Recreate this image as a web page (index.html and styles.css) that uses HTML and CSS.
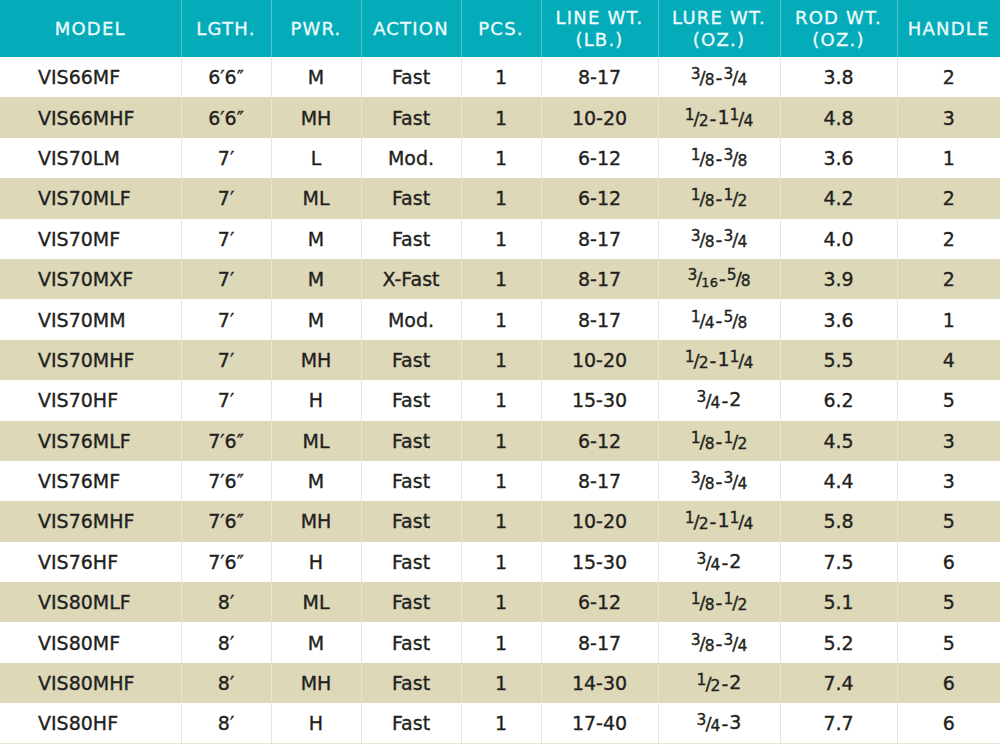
FILE: index.html
```html
<!DOCTYPE html>
<html>
<head>
<meta charset="utf-8">
<link rel="stylesheet" href="styles.css">
</head>
<body>
<table class="spec">
  <colgroup>
    <col class="c-model"><col class="c-lgth"><col class="c-pwr"><col class="c-action"><col class="c-pcs"><col class="c-line"><col class="c-lure"><col class="c-rod"><col class="c-handle">
  </colgroup>
  <thead>
    <tr>
      <th>MODEL</th><th>LGTH.</th><th>PWR.</th><th>ACTION</th><th>PCS.</th><th>LINE WT.<br>(LB.)</th><th>LURE WT.<br>(OZ.)</th><th>ROD WT.<br>(OZ.)</th><th>HANDLE</th>
    </tr>
  </thead>
  <tbody>
    <tr><td>VIS66MF</td><td>6′6″</td><td>M</td><td>Fast</td><td>1</td><td>8-17</td><td><span class="fr"><span class="n">3</span><span class="s">/</span><span class="d">8</span></span><span class="dash">-</span><span class="fr"><span class="n">3</span><span class="s">/</span><span class="d">4</span></span></td><td>3.8</td><td>2</td></tr>
    <tr><td>VIS66MHF</td><td>6′6″</td><td>MH</td><td>Fast</td><td>1</td><td>10-20</td><td><span class="fr"><span class="n">1</span><span class="s">/</span><span class="d">2</span></span><span class="dash">-</span>1<span class="fr"><span class="n">1</span><span class="s">/</span><span class="d">4</span></span></td><td>4.8</td><td>3</td></tr>
    <tr><td>VIS70LM</td><td>7′</td><td>L</td><td>Mod.</td><td>1</td><td>6-12</td><td><span class="fr"><span class="n">1</span><span class="s">/</span><span class="d">8</span></span><span class="dash">-</span><span class="fr"><span class="n">3</span><span class="s">/</span><span class="d">8</span></span></td><td>3.6</td><td>1</td></tr>
    <tr><td>VIS70MLF</td><td>7′</td><td>ML</td><td>Fast</td><td>1</td><td>6-12</td><td><span class="fr"><span class="n">1</span><span class="s">/</span><span class="d">8</span></span><span class="dash">-</span><span class="fr"><span class="n">1</span><span class="s">/</span><span class="d">2</span></span></td><td>4.2</td><td>2</td></tr>
    <tr><td>VIS70MF</td><td>7′</td><td>M</td><td>Fast</td><td>1</td><td>8-17</td><td><span class="fr"><span class="n">3</span><span class="s">/</span><span class="d">8</span></span><span class="dash">-</span><span class="fr"><span class="n">3</span><span class="s">/</span><span class="d">4</span></span></td><td>4.0</td><td>2</td></tr>
    <tr><td>VIS70MXF</td><td>7′</td><td>M</td><td>X-Fast</td><td>1</td><td>8-17</td><td><span class="fr"><span class="n">3</span><span class="s">/</span><span class="d sm">16</span></span><span class="dash">-</span><span class="fr"><span class="n">5</span><span class="s">/</span><span class="d">8</span></span></td><td>3.9</td><td>2</td></tr>
    <tr><td>VIS70MM</td><td>7′</td><td>M</td><td>Mod.</td><td>1</td><td>8-17</td><td><span class="fr"><span class="n">1</span><span class="s">/</span><span class="d">4</span></span><span class="dash">-</span><span class="fr"><span class="n">5</span><span class="s">/</span><span class="d">8</span></span></td><td>3.6</td><td>1</td></tr>
    <tr><td>VIS70MHF</td><td>7′</td><td>MH</td><td>Fast</td><td>1</td><td>10-20</td><td><span class="fr"><span class="n">1</span><span class="s">/</span><span class="d">2</span></span><span class="dash">-</span>1<span class="fr"><span class="n">1</span><span class="s">/</span><span class="d">4</span></span></td><td>5.5</td><td>4</td></tr>
    <tr><td>VIS70HF</td><td>7′</td><td>H</td><td>Fast</td><td>1</td><td>15-30</td><td><span class="fr"><span class="n">3</span><span class="s">/</span><span class="d">4</span></span><span class="dash">-</span>2</td><td>6.2</td><td>5</td></tr>
    <tr><td>VIS76MLF</td><td>7′6″</td><td>ML</td><td>Fast</td><td>1</td><td>6-12</td><td><span class="fr"><span class="n">1</span><span class="s">/</span><span class="d">8</span></span><span class="dash">-</span><span class="fr"><span class="n">1</span><span class="s">/</span><span class="d">2</span></span></td><td>4.5</td><td>3</td></tr>
    <tr><td>VIS76MF</td><td>7′6″</td><td>M</td><td>Fast</td><td>1</td><td>8-17</td><td><span class="fr"><span class="n">3</span><span class="s">/</span><span class="d">8</span></span><span class="dash">-</span><span class="fr"><span class="n">3</span><span class="s">/</span><span class="d">4</span></span></td><td>4.4</td><td>3</td></tr>
    <tr><td>VIS76MHF</td><td>7′6″</td><td>MH</td><td>Fast</td><td>1</td><td>10-20</td><td><span class="fr"><span class="n">1</span><span class="s">/</span><span class="d">2</span></span><span class="dash">-</span>1<span class="fr"><span class="n">1</span><span class="s">/</span><span class="d">4</span></span></td><td>5.8</td><td>5</td></tr>
    <tr><td>VIS76HF</td><td>7′6″</td><td>H</td><td>Fast</td><td>1</td><td>15-30</td><td><span class="fr"><span class="n">3</span><span class="s">/</span><span class="d">4</span></span><span class="dash">-</span>2</td><td>7.5</td><td>6</td></tr>
    <tr><td>VIS80MLF</td><td>8′</td><td>ML</td><td>Fast</td><td>1</td><td>6-12</td><td><span class="fr"><span class="n">1</span><span class="s">/</span><span class="d">8</span></span><span class="dash">-</span><span class="fr"><span class="n">1</span><span class="s">/</span><span class="d">2</span></span></td><td>5.1</td><td>5</td></tr>
    <tr><td>VIS80MF</td><td>8′</td><td>M</td><td>Fast</td><td>1</td><td>8-17</td><td><span class="fr"><span class="n">3</span><span class="s">/</span><span class="d">8</span></span><span class="dash">-</span><span class="fr"><span class="n">3</span><span class="s">/</span><span class="d">4</span></span></td><td>5.2</td><td>5</td></tr>
    <tr><td>VIS80MHF</td><td>8′</td><td>MH</td><td>Fast</td><td>1</td><td>14-30</td><td><span class="fr"><span class="n">1</span><span class="s">/</span><span class="d">2</span></span><span class="dash">-</span>2</td><td>7.4</td><td>6</td></tr>
    <tr><td>VIS80HF</td><td>8′</td><td>H</td><td>Fast</td><td>1</td><td>17-40</td><td><span class="fr"><span class="n">3</span><span class="s">/</span><span class="d">4</span></span><span class="dash">-</span>3</td><td>7.7</td><td>6</td></tr>
  </tbody>
</table>
</body>
</html>
```

FILE: styles.css
```css
html, body {
  margin: 0;
  padding: 0;
  background: #ffffff;
}
.spec {
  width: 1000px;
  border-collapse: collapse;
  table-layout: fixed;
  font-family: "DejaVu Sans", sans-serif;
  color: #231f20;
}
.c-model { width: 181px; }
.c-lgth { width: 90px; }
.c-pwr { width: 90px; }
.c-action { width: 100px; }
.c-pcs { width: 80px; }
.c-line { width: 117px; }
.c-lure { width: 122px; }
.c-rod { width: 117px; }
.c-handle { width: 103px; }
.spec thead th {
  background: #04acb9;
  color: #eefbfc;
  font-size: 18px;
  font-weight: normal;
  line-height: 22px;
  height: 57px;
  padding: 0;
  letter-spacing: 1.2px;
  -webkit-text-stroke: 0.3px currentColor;
  border-left: 1px solid #52c4cd;
  vertical-align: middle;
}
.spec thead th:first-child { border-left: none; }
.spec tbody td {
  height: 40.4px;
  padding: 0;
  font-size: 19px;
  text-align: center;
  vertical-align: middle;
  border-left: 1px solid #e8e5d2;
  box-sizing: border-box;
  line-height: 22px;
  white-space: nowrap;
  -webkit-text-stroke: 0.35px currentColor;
}
.spec tbody td:first-child {
  text-align: left;
  padding-left: 38px;
  border-left: none;
}
.spec tbody tr:nth-child(even) td { background: #dcd8b8; }
.spec tbody tr:last-child td { border-bottom: 1px solid #e8e5d2; }
.fr { white-space: nowrap; }
.fr .n {
  font-size: 15.5px;
  vertical-align: 4px;
}
.fr .s {
  font-size: 18px;
  margin: 0 -1px;
  vertical-align: -1px;
}
.fr .d {
  font-size: 15.5px;
  vertical-align: -2px;
}
.fr .d.sm {
  font-size: 13px;
  vertical-align: -3px;
}
.dash {
  margin: 0 1px;
  position: relative;
  top: 2px;
}
```
